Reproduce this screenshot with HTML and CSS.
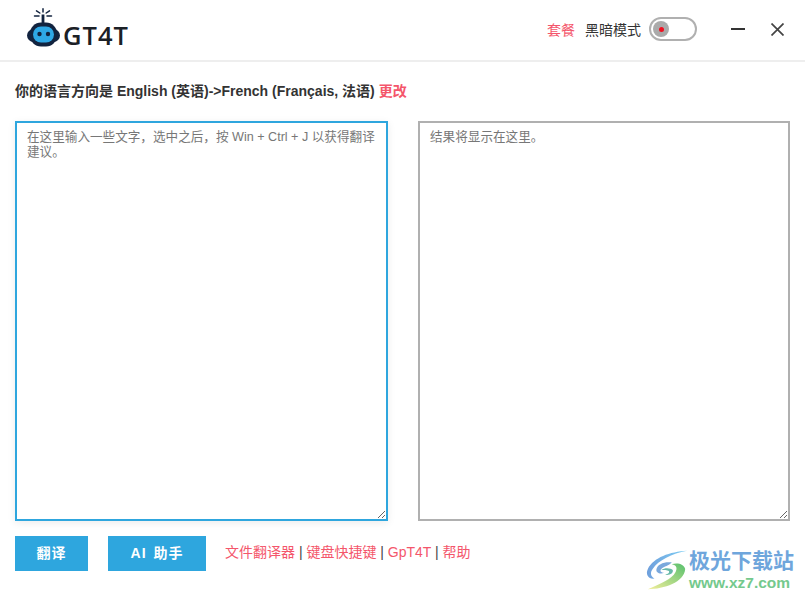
FILE: index.html
```html
<!DOCTYPE html>
<html lang="zh">
<head>
<meta charset="utf-8">
<title>GT4T</title>
<link rel="stylesheet" href="styles.css">
</head>
<body>
<header class="top">
  <div class="brand">
    <svg class="robot" width="33" height="39" viewBox="0 0 33 39">
      <g stroke="#12233f" stroke-width="1.500" stroke-linecap="round" fill="none">
        <path d="M16 4V.8M12.800 5 9.500 2.800M19.200 5l3.300-2.200M12 8H7.500M20 8h4.500"/>
      </g>
      <path d="M16 6.500V16" stroke="#12233f" stroke-width="2.800"/>
      <rect x="0" y="21" width="33" height="13" rx="6.500" fill="#12233f"/>
      <rect x="3" y="14.500" width="27" height="24" rx="11" fill="#12233f"/>
      <rect x="6" y="18.500" width="21" height="16" rx="8" fill="#2ea8e6"/>
      <circle cx="12.500" cy="26" r="2.200" fill="#12233f"/>
      <circle cx="21" cy="26" r="2.200" fill="#12233f"/>
    </svg>
    <span class="brand-name">GT4T</span>
  </div>
  <div class="top-right">
    <a class="plan">套餐</a>
    <span class="mode">黑暗模式</span>
    <span class="switch"><span class="knob"><span class="dot"></span></span></span>
    <svg class="win-btn minimize" width="14" height="16" viewBox="0 0 14 16"><path d="M0 8h14" stroke="#333" stroke-width="2"/></svg>
    <svg class="win-btn" width="13" height="13" viewBox="0 0 13 13"><path d="M.5.500l12 12M12.500.500l-12 12" stroke="#444" stroke-width="1.700"/></svg>
  </div>
</header>
<main class="content">
  <p class="direction">你的语言方向是 English (英语)-&gt;French (Français, 法语) <a class="change">更改</a></p>
  <div class="panes">
    <textarea class="pane pane-in" placeholder="在这里输入一些文字，选中之后，按 Win + Ctrl + J 以获得翻译建议。"></textarea>
    <textarea class="pane pane-out" placeholder="结果将显示在这里。"></textarea>
  </div>
  <div class="actions">
    <button class="btn btn-translate">翻译</button>
    <button class="btn btn-ai">AI 助手</button>
    <p class="links"><a>文件翻译器</a> | <a>键盘快捷键</a> | <a>GpT4T</a> | <a>帮助</a></p>
  </div>
</main>
<div class="watermark">
  <svg width="44" height="42" viewBox="0 0 46 42">
    <defs>
      <linearGradient id="sw1" x1="0" y1="0" x2="1" y2="0"><stop offset="0" stop-color="#6f9fdc"/><stop offset="1" stop-color="#7fd0f5"/></linearGradient>
      <linearGradient id="sw2" x1="0" y1="1" x2="1" y2="0"><stop offset="0" stop-color="#f3ee9a"/><stop offset="1" stop-color="#58c06e"/></linearGradient>
    </defs>
    <path d="M44 1C26 2 9 8 3 20c-3 6 1 11 7 10-4-2-5-6-2-10C14 11 28 4 44 1z" fill="url(#sw1)"/>
    <path d="M28 13c-8-1-15 2-16 7-1 4 4 6 8 4-3 0-5-2-3-4 3-3 8-3 11-7z" fill="#7aa8dc"/>
    <path d="M42 20c-1-5-8-7-14-5 5 1 6 4 4 8-4 8-16 12-29 18 17 0 38-7 39-21z" fill="url(#sw2)"/>
    <path d="M17 21c4-3 10-2 12 0 1 3-3 6-8 5 3-1 5-2 4-4-2-1-5-1-8-1z" fill="#66b8a8"/>
  </svg>
  <div class="wm-text">
    <span class="wm-cn">极光下载站</span>
    <span class="wm-url">www.xz7.com</span>
  </div>
</div>
</body>
</html>
```
FILE: styles.css
```css
* { box-sizing: border-box; }
html, body { margin: 0; height: 100%; }
body {
  position: relative;
  width: 805px;
  height: 600px;
  overflow: hidden;
  background: #fff;
  color: #333;
  font-family: "Liberation Sans", "Noto Sans CJK SC", sans-serif;
  font-size: 14px;
}
.top {
  display: flex;
  justify-content: space-between;
  align-items: center;
  height: 62px;
  padding: 0 21px 2px 27px;
  border-bottom: 2px solid #eee;
}
.brand { display: flex; align-items: flex-end; height: 39px; margin-top: -3px; }
.robot { display: block; }
.brand-name {
  margin: 0 0 -3px 3px;
  font-family: "Open Sans", sans-serif;
  font-size: 25.500px;
  line-height: 30px;
  font-weight: 600;
  letter-spacing: 1px;
  color: #1b2026;
}
.top-right { display: flex; align-items: center; }
.plan { color: #f4566b; margin-right: 10px; }
.mode { color: #333; margin-right: 8px; }
.switch {
  display: flex;
  align-items: center;
  width: 48px;
  height: 24px;
  padding-left: 2px;
  border: 2px solid #b0b0b0;
  border-radius: 12px;
  margin-right: 34px;
}
.knob {
  display: flex;
  align-items: center;
  justify-content: center;
  width: 16px;
  height: 16px;
  border-radius: 50%;
  background: #aaa;
}
.dot { width: 5px; height: 5px; border-radius: 50%; background: #f01020; }
.win-btn { display: block; }
.minimize { margin-right: 26px; }
.content { padding: 0 15px; }
.direction {
  margin: 19px 0 0;
  height: 20px;
  line-height: 20px;
  font-weight: 700;
  color: #333;
}
.change { color: #f4566b; }
.panes {
  display: flex;
  justify-content: space-between;
  margin-top: 20px;
}
.pane {
  display: block;
  width: 373px;
  height: 400px;
  padding: 7px 10px;
  margin: 0;
  border: 2px solid #b0b0b0;
  border-radius: 0;
  outline: none;
  background: #fff;
  font-family: inherit;
  font-size: 12.600px;
  line-height: 15px;
  color: #333;
}
.pane::placeholder { color: #777; opacity: 1; }
.pane-in {
  border-color: #2ea6de;
  box-shadow: 0 2px 8px rgba(0, 0, 0, 0.08);
}
.pane-out { width: 372px; }
.actions {
  display: flex;
  align-items: center;
  margin-top: 15px;
}
.btn {
  height: 35px;
  padding: 0 0 3px;
  border: 0;
  border-radius: 0;
  background: #2ea6de;
  color: #fff;
  font-family: inherit;
  font-size: 14px;
  font-weight: 700;
  letter-spacing: 1px;
}
.btn-translate { width: 73px; margin-right: 20px; }
.btn-ai { width: 98px; margin-right: 19px; word-spacing: 2px; }
.links { margin: -4px 0 0; color: #444; line-height: 18px; }
.links a { color: #f4566b; }
.watermark {
  position: absolute;
  left: 645px;
  top: 549px;
  display: flex;
  align-items: flex-start;
}
.wm-text { display: flex; flex-direction: column; }
.wm-cn {
  font-size: 21px;
  line-height: 24px;
  font-weight: 700;
  color: #6fa6dc;
}
.wm-url {
  margin-top: 1px;
  font-size: 15.500px;
  line-height: 18px;
  font-weight: 700;
  color: #74c98d;
}
```
